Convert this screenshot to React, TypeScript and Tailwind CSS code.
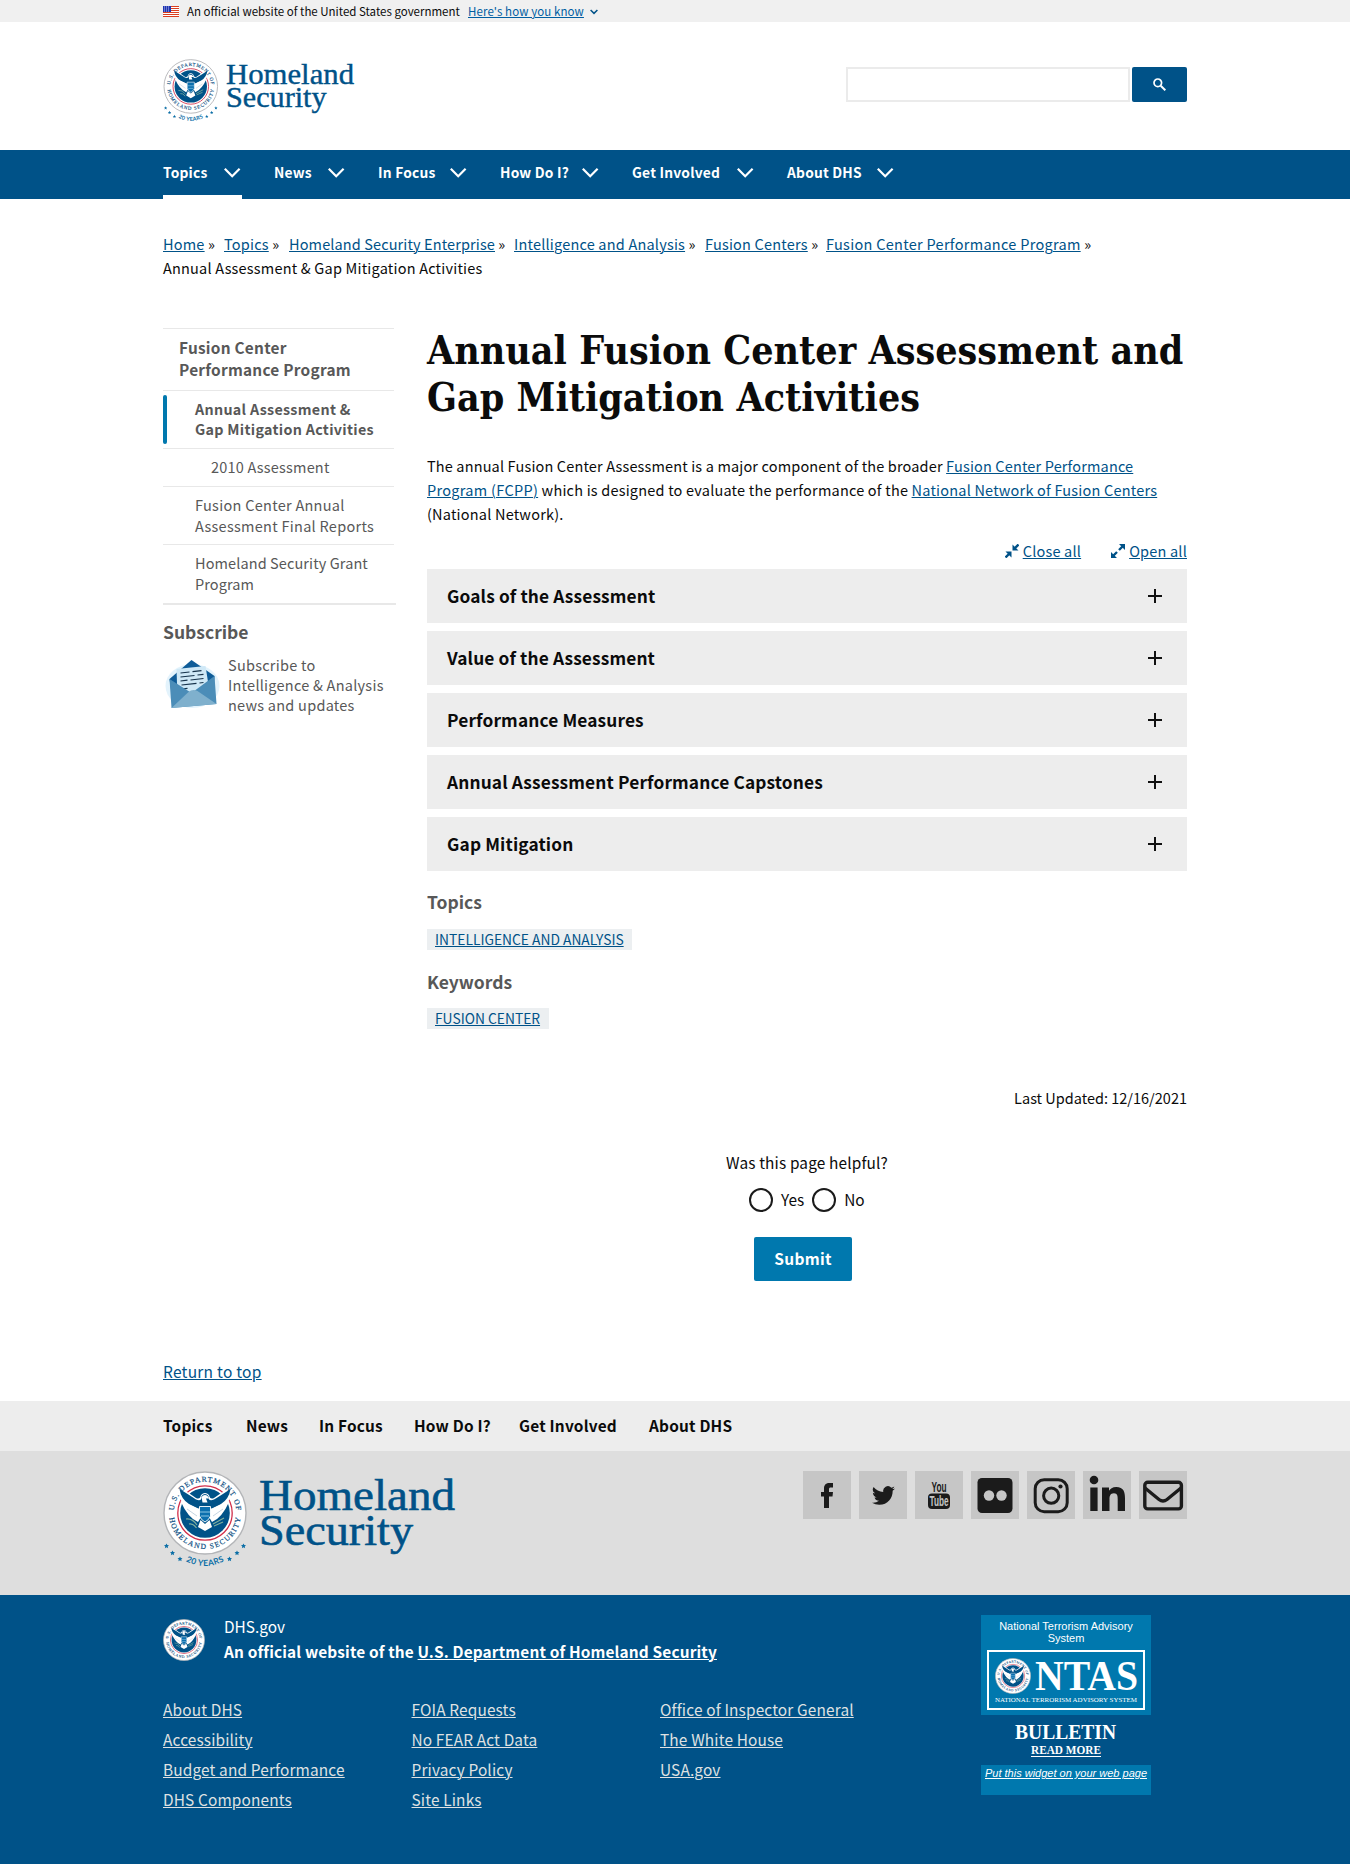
import React from "react";

const SANS = "font-['Noto_Sans_CJK_SC','Noto_Sans',sans-serif]";

const Eagle = () => (
  <g>
    <circle cx="42" cy="42" r="41" fill="#fff" stroke="#b3b5b8" strokeWidth="1.4" />
    <circle cx="42" cy="42" r="27.2" fill="#fff" stroke="#d12f4a" strokeWidth="1.3" />
    <circle cx="42" cy="42" r="24.8" fill="#005288" />
    <path d="M14.500 15 Q26 22 33 27 Q37 29 38 24 Q42 20 46 24 Q47 29 51 27 Q58 22 69.500 15 Q69 30 59 38 L47 46 H37 L25 38 Q15 30 14.500 15Z" fill="#fff" />
    <path d="M16.500 18 Q28 25 33 28.500 Q39 31 38.500 25 Q42 21 45.500 25 Q45 31 51 28.500 Q57 25 67.500 18 Q66 28 58 33 L49 37.500 H35 L26 33 Q18 28 16.500 18Z" fill="#005288" />
    <path d="M17.500 30 L36 38 L38 46 L35 51 Q25 47 17.500 30Z M66.500 30 L48 38 L46 46 L49 51 Q59 47 66.500 30Z" fill="#fff" />
    <path d="M24 38 L34 45 M60 38 L50 45" stroke="#9db9cf" strokeWidth=".6" />
    <path d="M38.500 26 Q41.500 22.500 45 25.500 L46 27.500 L43 27.500 L44.500 31.500 H39.500Z" fill="#fff" />
    <path d="M36.500 35.500 H47.500 V45 Q46 49 42 51 Q38 49 36.500 45Z" fill="#0b6fae" stroke="#fff" strokeWidth=".9" />
    <path d="M37 41 H47 M38 45 H46" stroke="#8cc6e3" strokeWidth="1" />
    <path d="M37.500 49 L42 53 L46.500 49 L49 56 L42 60 L35 56Z" fill="#fff" />
    <path d="M23 48 Q29 47 34 54 M26 53 Q30 52 33.500 57 M50 53 L61 47 M51 55 L60 51" stroke="#7fae9e" strokeWidth="1.2" fill="none" />
  </g>
);

const SealBody = ({ id }: { id: string }) => (
  <>
    <defs>
      <path id={`${id}-top`} d="M10.700 42 A31.300 31.300 0 0 1 73.300 42" />
      <path id={`${id}-bottom`} d="M6 42 A36 36 0 0 0 78 42" />
    </defs>
    <Eagle />
    <g fill="#0d4f83" stroke="#0d4f83" strokeWidth=".2" fontSize="7.5" textAnchor="middle">
      <text textLength="93" lengthAdjust="spacing">
        <textPath href={`#${id}-top`} startOffset="50%">U.S. DEPARTMENT OF</textPath>
      </text>
      <text textLength="103" lengthAdjust="spacing">
        <textPath href={`#${id}-bottom`} startOffset="50%">HOMELAND SECURITY</textPath>
      </text>
    </g>
  </>
);

const Seal = ({ id, className }: { id: string; className: string }) => (
  <svg viewBox="0 0 84 84" className={className} fontFamily="'Liberation Serif', serif">
    <SealBody id={id} />
  </svg>
);

const star = "M0 -2.600 L.8 -.9 L2.500 -.7 L1.200 .5 L1.600 2.200 L0 1.300 L-1.600 2.200 L-1.200 .5 L-2.500 -.7 L-.8 -.9Z";

const Logo = ({ id, className }: { id: string; className: string }) => (
  <svg viewBox="0 0 296 98" className={className} fontFamily="'Liberation Serif', serif">
    <SealBody id={id} />
    <g fill="#0b6ea6">
      {[[3.5, 75], [9.5, 82], [17, 88], [66.5, 88], [74, 82], [80.5, 75]].map(([x, y]) => (
        <path key={x} d={star} transform={`translate(${x} ${y})`} />
      ))}
      <path id={`${id}-years`} d="M16 86 Q42 104 68 86" fill="none" />
      <text fontFamily="Lato, sans-serif" fontWeight="700" fontSize="8.400" textAnchor="middle" textLength="40" lengthAdjust="spacing">
        <textPath href={`#${id}-years`} startOffset="50%">20 YEARS</textPath>
      </text>
    </g>
    <g fill="#005288" stroke="#005288" strokeWidth=".6" fontSize="45">
      <text x="96" y="38.500" textLength="196" lengthAdjust="spacingAndGlyphs">Homeland</text>
      <text x="96" y="74" textLength="154" lengthAdjust="spacingAndGlyphs">Security</text>
    </g>
  </svg>
);

const Flag = () => (
  <svg viewBox="0 0 16 11" className="h-[11px] w-4">
    <rect width="16" height="11" fill="#fff" />
    {[0, 2, 4, 6, 8, 10].map((y) => (
      <rect key={y} y={y} width="16" height="1" fill="#db3e1f" />
    ))}
    <rect width="8" height="6" fill="#1e33b1" />
    {[1, 3, 5].map((y) => (
      <path key={y} d={`M1 ${y}h1M3 ${y}h1M5 ${y}h1`} stroke="#fff" strokeWidth=".7" />
    ))}
  </svg>
);

const Chevron = () => (
  <svg viewBox="0 0 18 12" className="h-3 w-[18px]" fill="none" stroke="#fff" strokeWidth="2.200">
    <path d="M.8 1.800 L8.200 9.300 L15.600 1.800" />
  </svg>
);

const nav = [
  ["Topics", "w-[45px]", "w-[83px]"],
  ["News", "w-[38px]", "w-[73px]"],
  ["In Focus", "w-[56px]", "w-[95px]"],
  ["How Do I?", "w-[66px]", "w-[105px]"],
  ["Get Involved", "w-[89px]", "w-[130px]"],
  ["About DHS", "w-[74px]", "w-[90px]"],
];

const crumbs = [
  ["Home", "w-[61px]"],
  ["Topics", "w-[65px]"],
  ["Homeland Security Enterprise", "w-[225px] tracking-[0.12px]"],
  ["Intelligence and Analysis", "w-[191px]"],
  ["Fusion Centers", "w-[121px]"],
  ["Fusion Center Performance Program", "w-[270px] tracking-[0.29px]"],
];

const panels = ["Goals of the Assessment", "Value of the Assessment", "Performance Measures", "Annual Assessment Performance Capstones", "Gap Mitigation"];

const A = ({ children, className = "text-[#005288]" }: { children: React.ReactNode; className?: string }) => (
  <a href="#" className={`underline decoration-1 underline-offset-[1px] ${className}`}>{children}</a>
);

const Envelope = () => (
  <svg viewBox="0 0 56 52" className="mt-1 h-[52px] w-[57px] shrink-0">
    <ellipse cx="29" cy="27" rx="27" ry="22" fill="#e3f3fc" />
    <path d="M6 20 L28 1 L51 17 L50 32 L8 34Z" fill="#0f5c98" />
    <path d="M13 10 L42 7 L45 26 L34 42 L14 38Z" fill="#cfe8f6" />
    <path d="M17 14 L26 13 M29 12.700 L38 11.700 M17 18 L31 16.500 M34 16 L40 15.400 M17 22 L24 21.200 M27 21 L40 19.500 M18 26 L33 24.300 M36 24 L40 23.500 M18 30 L24 29.300" stroke="#16324a" strokeWidth="1.200" fill="none" />
    <path d="M6 20 L28 34 L51 17 L53 45 L8 49Z" fill="#4b8db8" />
    <path d="M8 49 L25 33 Q29 29.500 34 32 L53 45Z" fill="#7fb0cd" />
  </svg>
);

const Social = () => {
  const tile = "flex size-12 items-center justify-center bg-[#c6c6c6] text-[#1b1b1b]";
  return (
    <div className="flex gap-2">
      <a className={tile}>
        <svg viewBox="0 0 48 48" className="size-12" fill="currentColor"><path d="M21 37V25.500H18V21h3v-3.500C21 13.800 23.200 12 26.500 12H30v4.500h-2.200c-1.300 0-1.800.5-1.800 1.700V21h4l-.5 4.500H26V37Z" /></svg>
      </a>
      <a className={tile}>
        <svg viewBox="0 0 24 24" className="size-[23px]" fill="currentColor"><path d="M23.950 4.570a10 10 0 0 1-2.820.77 4.960 4.960 0 0 0 2.160-2.720c-.95.55-2 .95-3.120 1.180a4.920 4.920 0 0 0-8.380 4.480C7.690 8.090 4.070 6.130 1.640 3.160a4.920 4.920 0 0 0 1.520 6.570 4.900 4.900 0 0 1-2.230-.61v.06c0 2.380 1.700 4.370 3.950 4.820a5 5 0 0 1-2.210.09 4.940 4.940 0 0 0 4.600 3.420A9.870 9.870 0 0 1 0 19.540a14 14 0 0 0 7.550 2.210c9.050 0 14-7.500 14-13.980 0-.21 0-.42-.02-.63a9.940 9.940 0 0 0 2.460-2.550z" /></svg>
      </a>
      <a className={tile}>
        <svg viewBox="0 0 48 48" className="size-12" fontFamily="'Liberation Sans',sans-serif" fontWeight="700" textAnchor="middle">
          <text x="24" y="21" fontSize="14.500" fill="currentColor" textLength="15" lengthAdjust="spacingAndGlyphs">You</text>
          <rect x="13" y="22.500" width="22" height="15.500" rx="4" fill="currentColor" />
          <text x="24" y="35" fontSize="14" fill="#c6c6c6" textLength="19" lengthAdjust="spacingAndGlyphs">Tube</text>
        </svg>
      </a>
      <a className={tile}>
        <svg viewBox="0 0 48 48" className="size-12"><rect x="6.500" y="7" width="35" height="35" rx="4.500" fill="currentColor" /><circle cx="18" cy="24.500" r="5.200" fill="#c6c6c6" /><circle cx="30.500" cy="24.500" r="5.200" fill="#c6c6c6" /></svg>
      </a>
      <a className={tile}>
        <svg viewBox="0 0 48 48" className="size-12" fill="none" stroke="currentColor" strokeWidth="3"><rect x="8.200" y="8.700" width="32" height="32" rx="9" /><circle cx="24.200" cy="24.700" r="7.600" /><circle cx="33.500" cy="15.500" r="2.100" fill="currentColor" stroke="none" /></svg>
      </a>
      <a className={tile}>
        <svg viewBox="0 0 48 48" className="size-12" fill="currentColor"><circle cx="11" cy="9" r="4.300" /><path d="M7.300 16.500h7.300V40H7.300ZM19 16.500h7v3.200c1-1.900 3.500-3.800 7.200-3.800 7.500 0 8.800 5 8.800 11.300V40h-7.300V28.500c0-2.700 0-6.200-3.800-6.200s-4.400 3-4.400 6V40H19Z" /></svg>
      </a>
      <a className={tile}>
        <svg viewBox="0 0 48 48" className="size-12" fill="none" stroke="currentColor" strokeWidth="3.400"><rect x="5.800" y="11.300" width="36.600" height="26.600" rx="3" /><path d="M6 17 L20 28.500 Q24 31.500 28 28.500 L42 17" /></svg>
      </a>
    </div>
  );
};

const footerLinks = [
  ["About DHS", "Accessibility", "Budget and Performance", "DHS Components"],
  ["FOIA Requests", "No FEAR Act Data", "Privacy Policy", "Site Links"],
  ["Office of Inspector General", "The White House", "USA.gov"],
];

export default function App() {
  return (
    <div className={`h-[1864px] overflow-hidden bg-white whitespace-nowrap text-[#0b0b0b] ${SANS}`}>
      <div className="h-[22px] bg-[#f0f0f0]">
        <div className="mx-auto flex h-full w-[1024px] items-center text-[11.500px] leading-[22px]">
          <Flag />
          <span className="ml-2 w-[281px]">An official website of the United States government</span>
          <A className="w-[117px] tracking-[0.1px] text-[#005ea2]">Here's how you know</A>
          <svg viewBox="0 0 8 6" className="mt-0.5 ml-[5px] h-1.5 w-2" fill="none" stroke="#005288" strokeWidth="1.500"><path d="M.6 1 L4 4.400 L7.400 1" /></svg>
        </div>
      </div>

      <header className="mx-auto flex h-32 w-[1024px] justify-between">
        <Logo id="head" className="mt-[37px] h-16 w-[194px]" />
        <div className="mt-[45px] flex h-[35px] gap-0.5">
          <div className="w-[284px] border-2 border-[#ebebeb]" />
          <button className="flex w-[55px] items-center justify-center rounded-[2px] bg-[#005288]">
            <svg viewBox="0 0 13 13" className="size-[13px]" fill="none" stroke="#fff" strokeWidth="1.700"><circle cx="4.800" cy="4.800" r="3.800" /><path d="M7.700 7.700 L12.300 12.300" strokeWidth="2" /></svg>
          </button>
        </div>
      </header>

      <nav className="h-[49px] bg-[#005288]">
        <div className="mx-auto flex h-full w-[1024px] gap-8 text-[13.800px] leading-6 font-bold tracking-[0.2px] text-white">
          {nav.map(([label, width], i) => (
            <div key={label} className={`flex gap-4 border-b-4 pt-[10px] ${i === 0 ? "border-white" : "border-transparent"}`}>
              <span className={width}>{label}</span>
              <span className="pt-[7px]"><Chevron /></span>
            </div>
          ))}
        </div>
      </nav>

      <main className="mx-auto h-[1202px] w-[1024px] pt-[33px]">
        <div className="h-12 text-[14.500px] leading-6 tracking-[0.2px]">
          <div className="flex">
            {crumbs.map(([c, width]) => (
              <span key={c} className={width}><A>{c}</A> »</span>
            ))}
          </div>
          <div>Annual Assessment &amp; Gap Mitigation Activities</div>
        </div>

        <div className="mt-12 flex h-[1029px]">
          <aside className="w-[264px] text-[#585858]">
            <ul className="w-[231px] text-[14.500px] leading-[21px] tracking-[0.2px]">
              <li className="h-[62px] border-t border-[#e8e8e8] pt-[7px] pl-4 text-[15.400px] leading-[22px] font-bold tracking-[0.250px]">Fusion Center<br />Performance Program</li>
              <li className="flex h-[58px] border-t border-[#e8e8e8] pt-1 text-[14.300px] font-bold">
                <span className="h-[49px] w-1 rounded-full bg-[#0078ae]" />
                <span className="pt-1 pl-7 leading-5 tracking-[0.3px]">Annual Assessment &amp;<br />Gap Mitigation Activities</span>
              </li>
              <li className="h-[38px] border-t border-[#e8e8e8] pt-[7px] pl-12">2010 Assessment</li>
              <li className="h-[58px] border-t border-[#e8e8e8] pt-[7px] pl-8 tracking-[0.280px]">Fusion Center Annual<br />Assessment Final Reports</li>
              <li className="h-[59px] border-t border-[#e8e8e8] pt-[7px] pl-8 tracking-[0.1px]">Homeland Security Grant<br />Program</li>
            </ul>
            <h2 className="w-[233px] border-t-2 border-[#e8e8e8] pt-[13px] text-[17.500px] leading-7 font-bold">Subscribe</h2>
            <div className="mt-[9px] flex gap-2">
              <Envelope />
              <p className="text-[14.500px] leading-5 tracking-[0.250px]">Subscribe to<br />Intelligence &amp; Analysis<br />news and updates</p>
            </div>
          </aside>

          <section className="w-[760px]">
            <h1 className="-mt-px h-[95px] font-['DejaVu_Serif_Condensed','DejaVu_Serif',serif] text-[39px] leading-[47px] font-bold tracking-[0.020px]">Annual Fusion Center Assessment and<br />Gap Mitigation Activities</h1>
            <p className="mt-8 text-[14.500px] leading-6 tracking-[0.2px]">
              <span className="tracking-[0.150px]">The annual Fusion Center Assessment is a major component of the broader <A>Fusion Center Performance</A></span><br />
              <A className="tracking-[0.3px] text-[#005288]">Program (FCPP)</A> which is designed to evaluate the performance of the <A>National Network of Fusion Centers</A><br />
              (National Network).
            </p>
            <div className="mt-[13px] flex h-[30px] justify-end gap-[30px] text-[14.500px] leading-6 tracking-[0.2px]">
              <span className="flex gap-1">
                <svg viewBox="0 0 14 14" className="mt-[5px] size-3.5" fill="#005288" stroke="#005288"><path d="M7.500 .5V6.500H13.500ZM6.500 13.500V7.500H.5Z" stroke="none" /><path d="M9.500 4.500L13.500 .5M4.500 9.500L.5 13.500" strokeWidth="2.400" /></svg>
                <A>Close all</A>
              </span>
              <span className="flex gap-1">
                <svg viewBox="0 0 14 14" className="mt-[5px] size-3.5" fill="#005288" stroke="#005288"><path d="M14 0V6L8 0ZM0 14V8L6 14Z" stroke="none" /><path d="M11.500 2.500L8 6M2.500 11.500L6 8" strokeWidth="2.400" /></svg>
                <A>Open all</A>
              </span>
            </div>
            <div className="flex flex-col gap-2">
              {panels.map((p) => (
                <div key={p} className="flex h-[54px] items-center justify-between bg-[#ededed] pr-[25px] pl-5 text-[17.300px] leading-[54px] font-bold tracking-[0.140px]">
                  {p}
                  <svg viewBox="0 0 14 14" className="size-3.5" stroke="#111" strokeWidth="2"><path d="M0 7H14M7 0V14" /></svg>
                </div>
              ))}
            </div>
            <h2 className="mt-[17px] text-[17.500px] leading-7 font-bold text-[#585858]">Topics</h2>
            <div className="mt-[13px] flex h-[21px] w-[205px] bg-[#eceff1] pl-2 text-[13.800px] leading-[21px]"><A>INTELLIGENCE AND ANALYSIS</A></div>
            <h2 className="mt-[18px] text-[17.500px] leading-7 font-bold text-[#585858]">Keywords</h2>
            <div className="mt-3 flex h-[21px] w-[122px] bg-[#eceff1] pl-2 text-[13.800px] leading-[21px]"><A>FUSION CENTER</A></div>
            <p className="mt-[57px] text-right text-[14.500px] leading-6">Last Updated: 12/16/2021</p>
            <p className="mt-10 pl-[299px] text-[15.400px] leading-6 tracking-[0.150px]">Was this page helpful?</p>
            <div className="mt-[14px] flex gap-2 pl-[322px] text-[15.400px] leading-[23px]">
              <label className="flex gap-2"><span className="size-6 rounded-full border-2 border-[#1b1b1b]" />Yes</label>
              <label className="flex gap-2"><span className="size-6 rounded-full border-2 border-[#1b1b1b]" />No</label>
            </div>
            <button className="mt-[25px] ml-[327px] flex h-11 w-[98px] justify-center rounded-[2px] bg-[#0078ae] text-[15.500px] leading-[42px] font-bold tracking-[0.3px] text-white">Submit</button>
          </section>
        </div>
        <div className="mt-[2px] text-[15.500px] leading-6 tracking-[0.250px]"><A>Return to top</A></div>
      </main>

      <footer>
        <div className="h-[50px] bg-[#ededed]">
          <div className="mx-auto flex w-[1024px] text-[15.400px] leading-[48px] font-bold tracking-[0.2px]">
            {nav.map(([label, , width]) => <span key={label} className={width}>{label}</span>)}
          </div>
        </div>
        <div className="h-36 bg-[#dedede]">
          <div className="mx-auto flex w-[1024px] justify-between pt-5">
            <Logo id="foot" className="h-[98px] w-[296px]" />
            <Social />
          </div>
        </div>
        <div className="h-[269px] bg-[#005288] text-white">
          <div className="mx-auto flex w-[1024px]">
            <div className="w-[818px] pt-[19px] tracking-[0.150px]">
              <div className="flex gap-[19px] text-[15.400px] leading-[25px]">
                <Seal id="ident" className="mt-[5px] size-[42px]" />
                <div>
                  <div className="tracking-normal">DHS.gov</div>
                  <div className="font-bold">An official website of the <A className="text-white">U.S. Department of Homeland Security</A></div>
                </div>
              </div>
              <div className="mt-[30px] flex text-[15.400px] leading-[30px]">
                {footerLinks.map((col) => (
                  <ul key={col[0]} className="w-[248.500px]">
                    {col.map((l) => <li key={l}><A className="text-[#dfe1e2]">{l}</A></li>)}
                  </ul>
                ))}
              </div>
            </div>
            <div className="w-[170px] pt-5 text-center font-['Liberation_Sans',sans-serif]">
              <div className="h-[100px] bg-[#0078ae] px-1.5 pt-1 text-[11px] leading-3">
                <div className="pt-px">National Terrorism Advisory<br />System</div>
                <div className="mt-1.5 h-[60px] border-2 border-white">
                  <svg viewBox="0 0 154 56" className="h-14 w-full" fontFamily="'Liberation Serif',serif" fill="#fff">
                    <svg x="6" y="6" width="36" height="36" viewBox="0 0 84 84"><SealBody id="ntas" /></svg>
                    <text x="46" y="38" fontSize="42" fontWeight="700" textLength="103" lengthAdjust="spacingAndGlyphs">NTAS</text>
                    <text x="6" y="50" fontSize="7" textLength="142" lengthAdjust="spacingAndGlyphs">NATIONAL TERRORISM ADVISORY SYSTEM</text>
                  </svg>
                </div>
              </div>
              <svg viewBox="0 0 170 50" className="h-[50px] w-full" fontFamily="'Liberation Serif',serif" fontWeight="700" fill="#fff">
                <text x="34" y="24" fontSize="21" textLength="101" lengthAdjust="spacingAndGlyphs">BULLETIN</text>
                <text x="50" y="39" fontSize="13" textLength="70" lengthAdjust="spacingAndGlyphs">READ MORE</text>
                <path d="M50 41.500H120" stroke="#fff" />
              </svg>
              <div className="h-[30px] bg-[#0078ae] pt-[2px] text-[11px] leading-3 italic"><A className="text-white">Put this widget on your web page</A></div>
            </div>
          </div>
        </div>
      </footer>
    </div>
  );
}
